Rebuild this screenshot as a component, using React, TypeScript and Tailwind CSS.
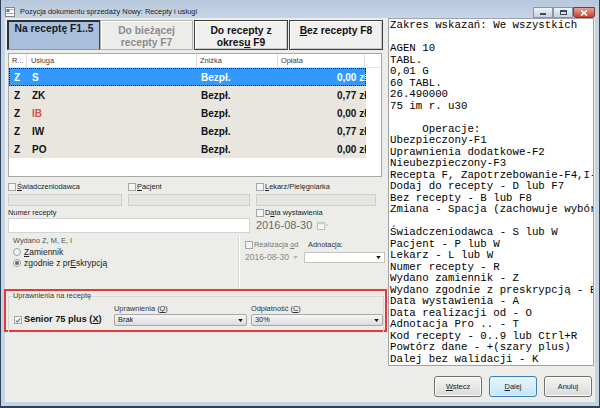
import React from 'react';

const ui = "font-['Liberation_Sans',Arial,sans-serif]";
const mono = "font-['Liberation_Mono','Courier_New',monospace]";

const rows = [
  { r: 'Z', u: 'S', z: 'Bezpł.', o: '0,00 zł', sel: true },
  { r: 'Z', u: 'ZK', z: 'Bezpł.', o: '0,77 zł' },
  { r: 'Z', u: 'IB', z: 'Bezpł.', o: '0,00 zł', red: true },
  { r: 'Z', u: 'IW', z: 'Bezpł.', o: '0,77 zł' },
  { r: 'Z', u: 'PO', z: 'Bezpł.', o: '0,00 zł' },
];

const help = [
  'Zakres wskazań: We wszystkich',
  '',
  'AGEN 10',
  'TABL.',
  '0,01 G',
  '60 TABL.',
  '26.490000',
  '75 im r. u30',
  '',
  '     Operacje:',
  'Ubezpieczony-F1',
  'Uprawnienia dodatkowe-F2',
  'Nieubezpieczony-F3',
  'Recepta F, Zapotrzebowanie-F4,I-',
  'Dodaj do recepty - D lub F7',
  'Bez recepty - B lub F8',
  'Zmiana - Spacja (zachowuje wybór',
  '',
  'Świadczeniodawca - S lub W',
  'Pacjent - P lub W',
  'Lekarz - L lub W',
  'Numer recepty - R',
  'Wydano zamiennik - Z',
  'Wydano zgodnie z preskrypcją - E',
  'Data wystawienia - A',
  'Data realizacji od - O',
  'Adnotacja Pro .. - T',
  'Kod recepty - 0..9 lub Ctrl+R',
  'Powtórz dane - +(szary plus)',
  'Dalej bez walidacji - K',
];

function Check({ checked = false }: { checked?: boolean }) {
  return (
    <span className="inline-flex h-[8px] w-[8px] shrink-0 items-center justify-center border border-[#a7a7a7] bg-[#f3f3f3]">
      {checked && (
        <svg viewBox="0 0 8 8" className="h-[7px] w-[7px]">
          <path d="M1.2 4.2 3.2 6.2 6.8 1.4" stroke="#6d7a8a" strokeWidth="1.5" fill="none" />
        </svg>
      )}
    </span>
  );
}

function Radio({ on = false }: { on?: boolean }) {
  return (
    <span className="inline-flex h-[8px] w-[8px] shrink-0 items-center justify-center rounded-full border border-[#a0a0a0] bg-[#f2f2f2]">
      {on && <span className="h-[4px] w-[4px] rounded-full bg-[#6b6b6b]" />}
    </span>
  );
}

function Arrow({ color = '#111' }: { color?: string }) {
  return (
    <svg viewBox="0 0 6 4" className="h-[3px] w-[5px]">
      <path d="M0 0h6L3 4z" fill={color} />
    </svg>
  );
}

function Combo({ value, w }: { value: string; w: string }) {
  return (
    <div className={`${w} flex h-[12px] items-center justify-between rounded-[2px] border border-[#a8a8a8] bg-gradient-to-b from-[#f6f6f6] to-[#dcdcdc] pl-[3px] pr-[3px] text-[7.4px] leading-none text-[#222]`}>
      <span>{value}</span>
      <Arrow />
    </div>
  );
}

function WinBtn({ kind }: { kind: 'min' | 'max' | 'close' }) {
  if (kind === 'close') {
    return (
      <div className="flex h-[11px] w-[22px] items-center justify-center rounded-b-[3px] border border-[#7a3b35] bg-gradient-to-b from-[#e6a08f] to-[#c4402f]">
        <svg viewBox="0 0 8 6" className="h-[6px] w-[8px]">
          <path d="M1 0.5 7 5.5M7 0.5 1 5.5" stroke="#fff" strokeWidth="1.6" />
        </svg>
      </div>
    );
  }
  return (
    <div className="flex h-[11px] w-[20px] items-center justify-center border border-[#8797ab] bg-gradient-to-b from-[#eef3f8] to-[#c6d3e2]">
      {kind === 'min' ? (
        <span className="mt-[3px] h-[2px] w-[6px] bg-[#3b4a5c]" />
      ) : (
        <span className="h-[5px] w-[7px] border border-t-2 border-[#3b4a5c]" />
      )}
    </div>
  );
}

function TitleBar() {
  return (
    <div className="flex h-[18px] bg-gradient-to-b from-[#b7c8dc] to-[#c6d5e7]">
      <div className="ml-[4px] mt-[7px] flex h-[10px] items-center">
        <svg viewBox="0 0 10 10" className="h-[10px] w-[10px]">
          <rect x="0.5" y="0.5" width="9" height="9" fill="#fdfdfd" stroke="#7c8794" />
          <rect x="1.5" y="2" width="3" height="3" fill="#3d7fc2" />
          <rect x="5.5" y="2" width="3" height="1" fill="#9aa6b3" />
          <rect x="1.5" y="6" width="7" height="1" fill="#9aa6b3" />
        </svg>
        <span className="ml-[5px] text-[7.4px] leading-none text-[#1c1c1c]">
          Pozycja dokumentu sprzedaży Nowy: Recepty i usługi
        </span>
      </div>
      <div className="ml-auto mr-[4px] mt-[7px] flex">
        <WinBtn kind="min" />
        <WinBtn kind="max" />
        <WinBtn kind="close" />
      </div>
    </div>
  );
}

function Tabs() {
  return (
    <div className="ml-[2px] mt-[2px] flex h-[30px] w-[376px] text-[10.3px] font-bold leading-[12px]">
      <div className="w-[93px] border-l-2 border-t-2 border-r border-b border-l-[#27303f] border-t-[#27303f] border-r-[#3a4253] border-b-[#8898ae] bg-[#a9bfdc] pt-[1px] text-center text-[#141a2a]">
        Na receptę F1..5
      </div>
      <div className="w-[93px] border border-[#b3b3b3] bg-[#ececea] pt-[4px] text-center text-[#8b8b8b] shadow-[inset_1px_1px_0_#fff]">
        Do bieżącej
        <br />
        recepty F7
      </div>
      <div className="ml-[1px] w-[94px] border border-[#3f3f3f] bg-[#f0f0ee] pt-[4px] text-center text-[#111] shadow-[inset_1px_1px_0_#fff,inset_-1px_-1px_0_#c8c8c8]">
        Do recepty z
        <br />
        okres<span className="underline">u</span> F9
      </div>
      <div className="ml-[1px] w-[94px] border border-[#3f3f3f] bg-[#f0f0ee] pt-[4px] text-center text-[#111] shadow-[inset_1px_1px_0_#fff,inset_-1px_-1px_0_#c8c8c8]">
        <span className="underline">B</span>ez recepty F8
      </div>
    </div>
  );
}

function Table() {
  return (
    <div className="ml-[3px] mt-[3px] h-[124px] w-[374px] overflow-hidden border border-[#a9a9a9] bg-white">
      <div className="flex h-[14px] items-center border-b border-[#e4e4e4] text-[7.4px] text-[#3c3c3c]">
        <div className="flex h-full w-[18px] items-center border-r border-[#dedede] pl-[3px]">R...</div>
        <div className="flex h-full w-[170px] items-center border-r border-[#dedede] pl-[4px]">Usługa</div>
        <div className="flex h-full w-[81px] items-center border-r border-[#dedede] pl-[3px]">Zniżka</div>
        <div className="flex h-full w-[87px] items-center border-r border-[#dedede] pl-[3px]">Opłata</div>
        <div className="flex-1" />
      </div>
      {rows.map((row, i) => (
        <div
          key={i}
          className={`flex h-[18px] w-[357px] items-center text-[10px] font-bold ${
            row.sel
              ? 'bg-[#3399ff] text-white outline-1 outline-dotted -outline-offset-1 outline-[#1a1a1a]'
              : 'bg-[#e8e6df] text-[#111]'
          }`}
        >
          <div className="w-[18px] pl-[5px]">{row.r}</div>
          <div className={`w-[170px] pl-[5px] ${row.red ? 'text-[#e0484a]' : ''}`}>{row.u}</div>
          <div className="w-[81px] pl-[4px]">{row.z}</div>
          <div className="flex w-[88px] justify-end overflow-hidden">
            <span className="-mr-[1px] shrink-0">{row.o}</span>
          </div>
        </div>
      ))}
    </div>
  );
}

function Fields() {
  return (
    <>
      <div className="ml-[3px] mt-[5px] flex h-[9px] items-center text-[7.4px] leading-none text-[#222]">
        <div className="flex w-[120px] items-center gap-[1px]">
          <Check />
          <span>
            <span className="underline">Ś</span>wiadczeniodawca
          </span>
        </div>
        <div className="flex w-[128px] items-center gap-[1px]">
          <Check />
          <span>
            <span className="underline">P</span>acjent
          </span>
        </div>
        <div className="flex items-center gap-[1px]">
          <Check />
          <span>
            <span className="underline">L</span>ekarz/Pielęgniarka
          </span>
        </div>
      </div>
      <div className="ml-[3px] mt-[3px] flex h-[12px] gap-[6px]">
        <div className="w-[114px] border border-[#cfcfcf] bg-[#e5e5e3]" />
        <div className="w-[122px] border border-[#cfcfcf] bg-[#e5e5e3]" />
        <div className="w-[120px] border border-[#cfcfcf] bg-[#e5e5e3]" />
      </div>
      <div className="ml-[3px] mt-[3px] flex h-[8px] items-center text-[7.4px] leading-none text-[#222]">
        <div className="w-[248px]">Numer recepty</div>
        <div className="flex items-center gap-[1px]">
          <Check />
          <span>
            D<span className="underline">a</span>ta wystawienia
          </span>
        </div>
      </div>
      <div className="ml-[3px] mt-[1px] flex h-[15px] items-center">
        <div className="h-full w-[242px] border border-[#d3d3d3] bg-white" />
        <div className="ml-[6px] flex items-center text-[11px] leading-none text-[#6a6a6a]">
          <span>2016-08-30</span>
          <svg viewBox="0 0 12 10" className="ml-[5px] h-[9px] w-[11px]">
            <rect x="0.5" y="1.5" width="8" height="8" fill="#f4f4f4" stroke="#b9b9b9" />
            <rect x="0.5" y="1.5" width="8" height="2" fill="#cfcfcf" />
            <path d="M9.5 4h2.5L10.75 5.6z" fill="#b0b0b0" />
          </svg>
        </div>
      </div>
    </>
  );
}

function Lower() {
  return (
    <div className="mt-[3px] flex h-[52px]">
      <div className="ml-[3px] w-[231px] border-r border-[#d6d6d6] pl-[5px] shadow-[1px_0_0_#fff]">
        <div className="mt-[1px] text-[7.4px] leading-[8px] text-[#4f4f4f]">Wydano Z, M, E, I</div>
        <div className="mt-[2px] flex h-[10px] items-center gap-[3px] text-[8.5px] leading-none text-[#222]">
          <Radio />
          <span>
            <span className="underline">Z</span>amiennik
          </span>
        </div>
        <div className="mt-[1px] flex h-[10px] items-center gap-[3px] text-[8.5px] leading-none text-[#222]">
          <Radio on />
          <span>
            zgodnie z pr<span className="underline">E</span>skrypcją
          </span>
        </div>
      </div>
      <div className="pl-[6px]">
        <div className="mt-[5px] flex h-[8px] items-center text-[7.4px] leading-none text-[#333]">
          <div className="flex w-[63px] items-center gap-[1px]">
            <Check />
            <span className="text-[#777]">
              Realizacja <span className="underline">o</span>d
            </span>
          </div>
          <span>Adnotacja:</span>
        </div>
        <div className="mt-[3px] flex h-[11px] items-center">
          <div className="flex w-[59px] items-center text-[8.6px] leading-none text-[#8a8a8a]">
            <span>2016-08-30</span>
            <span className="ml-[4px]">
              <Arrow color="#b5b5b5" />
            </span>
          </div>
          <div className="flex h-[11px] w-[81px] items-center justify-end border border-[#c4c4c4] bg-white pr-[3px]">
            <Arrow />
          </div>
        </div>
      </div>
    </div>
  );
}

function RedBox() {
  return (
    <div className="-ml-px mt-[1px] h-[43px] w-[383px] border-2 border-[#e3393b]">
      <fieldset className="ml-[2px] mt-[1px] h-[40px] w-[375px] border border-b-0 border-[#d7d7d7] pl-[5px]">
        <legend className="ml-[-1px] px-0 text-[7.4px] leading-[8px] text-[#3c3c3c]">Uprawnienia na receptę</legend>
        <div className="mt-[5px] flex">
          <div className="mt-[10px] flex h-[10px] w-[100px] items-center gap-[2px]">
            <Check checked />
            <span className="text-[9.2px] font-bold leading-none text-[#151515]">
              Senior 75 plus (<span className="underline">X</span>)
            </span>
          </div>
          <div className="w-[137px]">
            <div className="h-[9px] text-[7.4px] leading-none text-[#333]">
              Uprawnienia (<span className="underline">Q</span>)
            </div>
            <Combo value="Brak" w="w-[133px]" />
          </div>
          <div>
            <div className="h-[9px] text-[7.4px] leading-none text-[#333]">
              Odpłatność (<span className="underline">C</span>)
            </div>
            <Combo value="30%" w="w-[132px]" />
          </div>
        </div>
      </fieldset>
    </div>
  );
}

function DlgButton({ label, first, def = false }: { label: string; first?: boolean; def?: boolean }) {
  return (
    <div
      className={`flex h-[21px] w-[48px] items-center justify-center rounded-[3px] border text-[7.4px] leading-none text-[#1a1a1a] ${
        def
          ? 'border-[#3c7fb1] bg-gradient-to-b from-[#eaf6fd] to-[#bee6fd] shadow-[inset_0_0_0_1px_#dcf0fb]'
          : 'border-[#707070] bg-gradient-to-b from-[#f4f4f4] to-[#dadada] shadow-[inset_0_0_0_1px_#fbfbfb]'
      }`}
    >
      {first ? (
        <span>
          <span className="underline">{label[0]}</span>
          {label.slice(1)}
        </span>
      ) : (
        label
      )}
    </div>
  );
}

export default function App() {
  return (
    <div className={`${ui} h-[408px] w-[600px] overflow-hidden bg-[#2f4058] px-px pb-[2px] text-[#1b1b1b]`}>
      <div className="flex h-full flex-col bg-[#c4d4e7]">
        <TitleBar />
        <div className="mx-[4px] mb-[4px] flex flex-1 bg-[#ecede9]">
          <div className="flex w-[383px] flex-col">
            <Tabs />
            <Table />
            <Fields />
            <Lower />
            <RedBox />
          </div>
          <div className="flex w-[206px] flex-col">
            <div
              className={`${mono} h-[348px] overflow-hidden whitespace-pre border border-[#9da3ab] bg-white pl-px pt-px text-[10.75px] leading-[11.5px] text-black`}
            >
              {help.map((l, i) => (
                <div key={i} className="h-[11.5px]">
                  {l}
                </div>
              ))}
            </div>
            <div className="mt-[10px] flex justify-end gap-[7px] pr-[2px]">
              <DlgButton label="Wstecz" first />
              <DlgButton label="Dalej" first def />
              <DlgButton label="Anuluj" />
            </div>
          </div>
        </div>
      </div>
    </div>
  );
}
